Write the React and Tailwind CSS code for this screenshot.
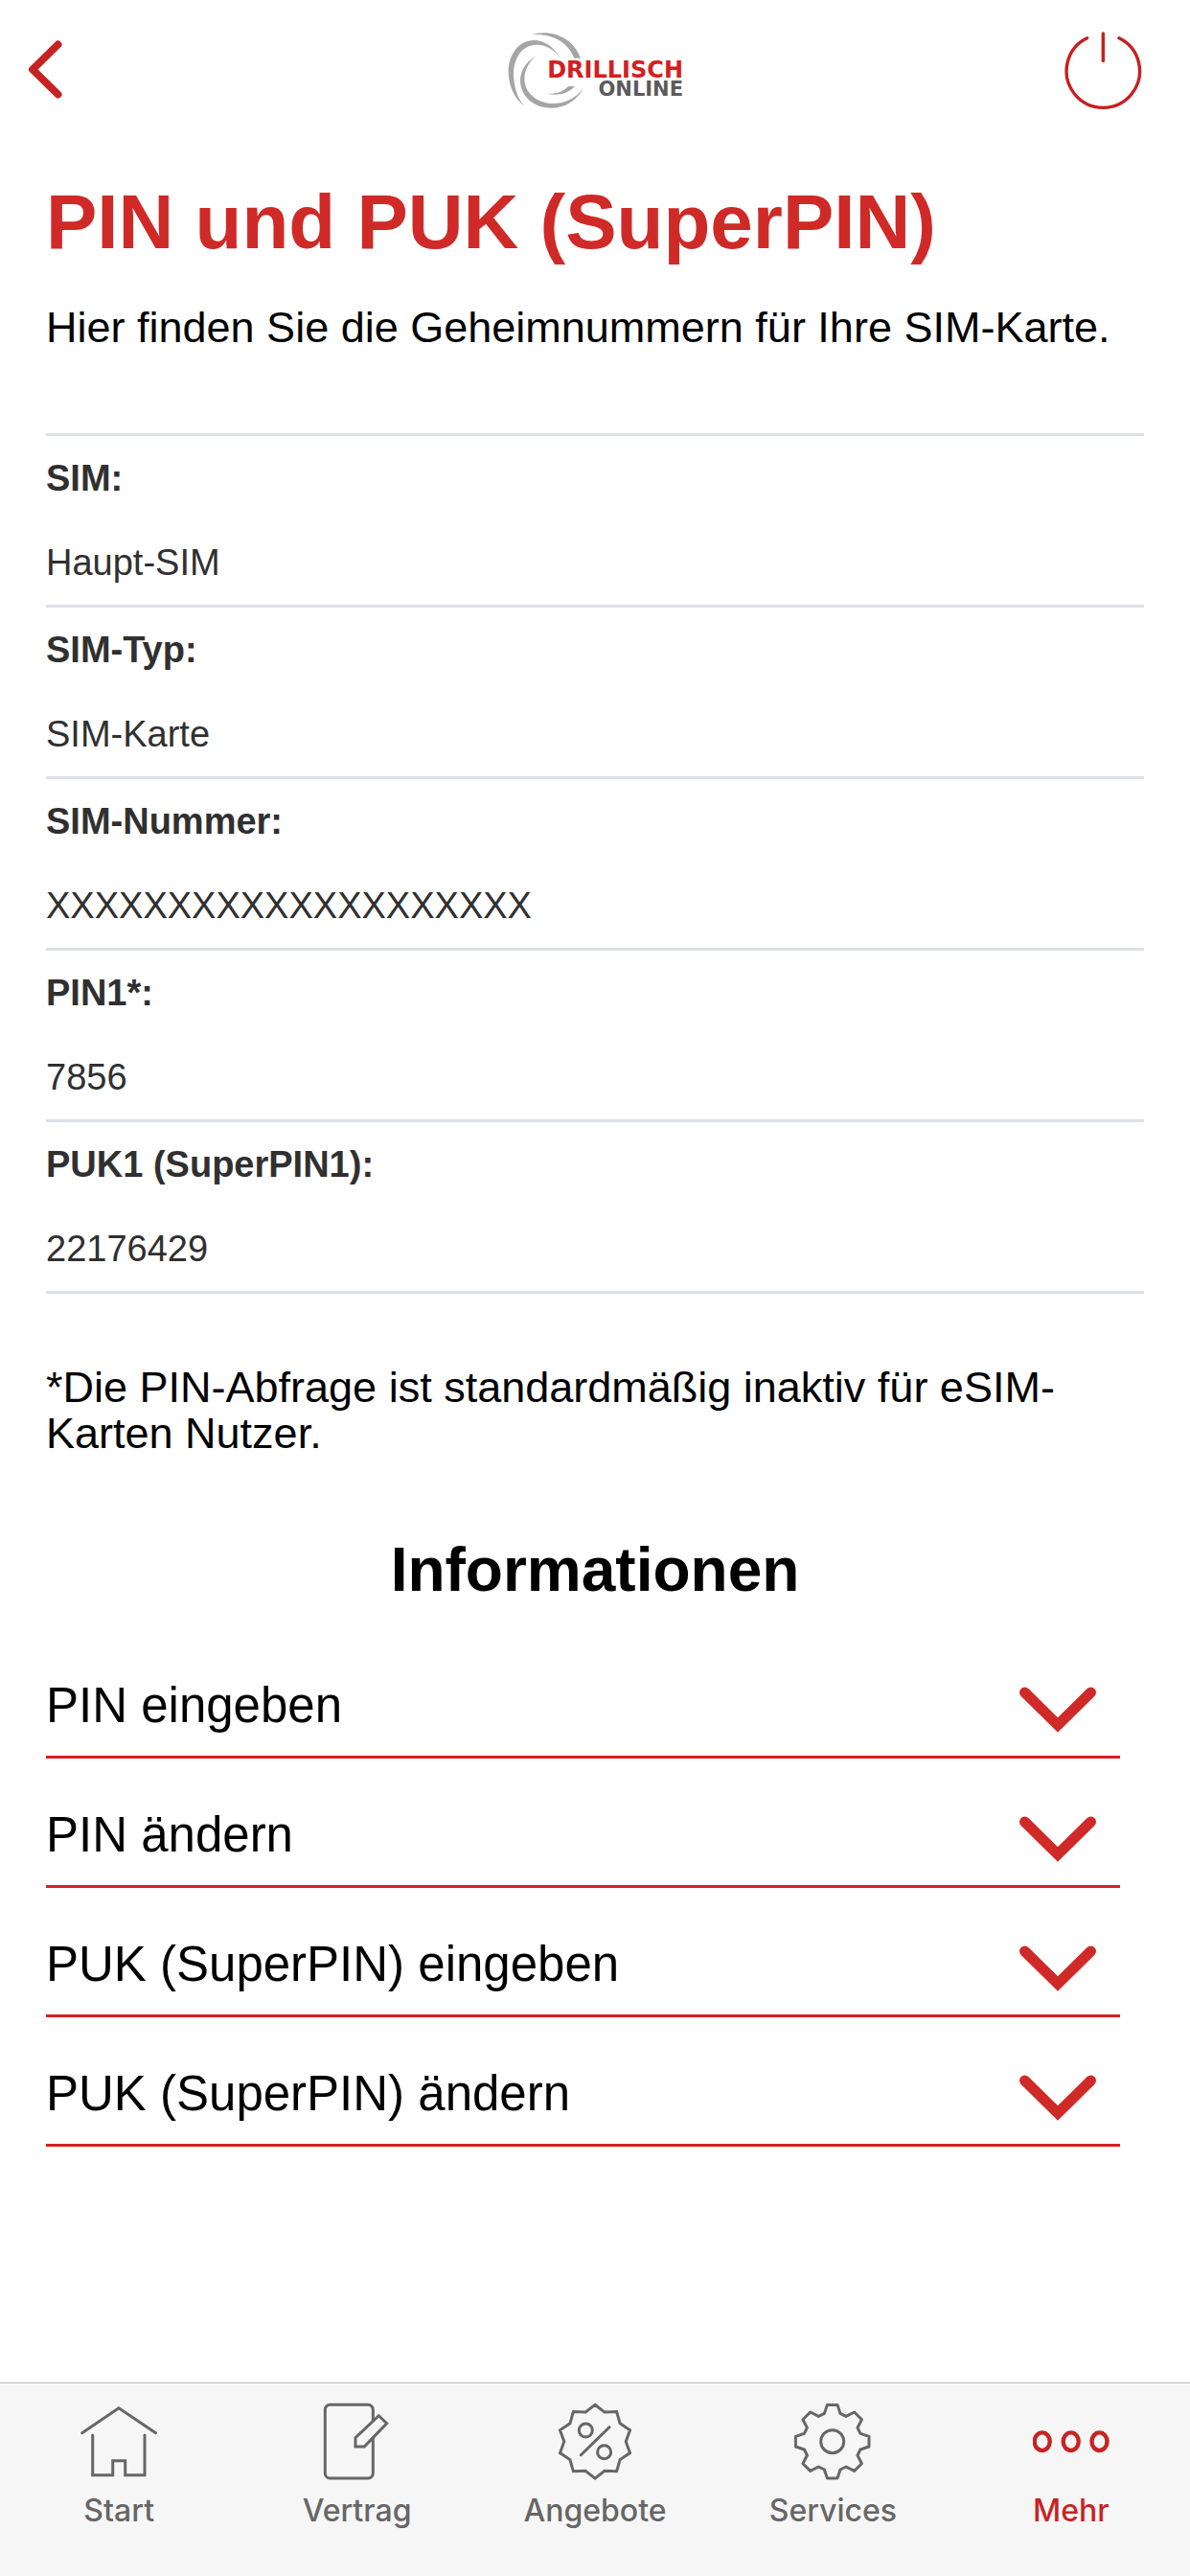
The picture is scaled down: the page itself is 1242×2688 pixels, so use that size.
import React, { useState } from 'react';

const simDetails = [
    { label: 'SIM:', value: 'Haupt-SIM' },
    { label: 'SIM-Typ:', value: 'SIM-Karte' },
    { label: 'SIM-Nummer:', value: 'XXXXXXXXXXXXXXXXXXXX' },
    { label: 'PIN1*:', value: '7856' },
    { label: 'PUK1 (SuperPIN1):', value: '22176429' },
];

const infoTopics = ['PIN eingeben', 'PIN ändern', 'PUK (SuperPIN) eingeben', 'PUK (SuperPIN) ändern'];

// Ten-pointed badge outline, alternating outer and inner radius
const badgePoints = Array.from({ length: 20 }, (_, i) => {
    const radius = i % 2 === 0 ? 38.4 : 32.2;
    const angle = (i * Math.PI) / 10;
    return `${(40 + radius * Math.sin(angle)).toFixed(1)},${(40.7 - radius * Math.cos(angle)).toFixed(1)}`;
}).join(' ');

// One quarter of the gear, repeated four times around its centre
const gearQuarter = [[5.3, -38.3], [8.3, -29.3], [14.3, -26.3], [23, -30.7], [30.7, -23], [26.3, -14.3], [29.3, -8.3], [38.3, -5.3]];
const gearPoints = [0, 1, 2, 3].flatMap((turn) =>
    gearQuarter.map(([x, y]) => {
        let px = x;
        let py = y;
        for (let i = 0; i < turn; i++) {
            [px, py] = [-py, px];
        }
        return `${(39.7 + px).toFixed(1)},${(40.7 + py).toFixed(1)}`;
    })
).join(' ');

function TabIcon({ children }) {
    return (
        <svg viewBox="0 0 80 82" className="h-[82px] w-20" fill="none" stroke="currentColor" strokeWidth="3" strokeLinecap="round" aria-hidden="true">
            {children}
        </svg>
    );
}

const tabs = [
    {
        label: 'Start',
        icon: (
            <TabIcon>
                <path d="M1.7 31.7 40 5.7 78.5 31.7" />
                <path d="M12.7 34V75.7H33.7V60.7H46.7V75.7H67V34" />
            </TabIcon>
        ),
    },
    {
        label: 'Vertrag',
        icon: (
            <TabIcon>
                <path d="M56.3 19V7.3a5 5 0 0 0-5-5H11.3a5 5 0 0 0-5 5V74a5 5 0 0 0 5 5H51.3a5 5 0 0 0 5-5V36.5" />
                <path d="M38 46V36.7L62.3 13.7 70.7 21.7 47.3 46Z" />
            </TabIcon>
        ),
    },
    {
        label: 'Angebote',
        icon: (
            <TabIcon>
                <polygon points={badgePoints} />
                <circle cx="30.3" cy="29" r="7" />
                <circle cx="49.6" cy="51.7" r="7" />
                <path d="M55 25.7 25.3 54.7" />
            </TabIcon>
        ),
    },
    {
        label: 'Services',
        icon: (
            <TabIcon>
                <polygon points={gearPoints} strokeLinejoin="round" />
                <circle cx="39.7" cy="40.7" r="12" />
            </TabIcon>
        ),
    },
    {
        label: 'Mehr',
        active: true,
        icon: (
            <TabIcon>
                <g strokeWidth="4.4">
                    <ellipse cx="9.7" cy="40.7" rx="8" ry="9.3" />
                    <ellipse cx="39.7" cy="40.7" rx="8" ry="9.3" />
                    <ellipse cx="69.5" cy="40.7" rx="8" ry="9.3" />
                </g>
            </TabIcon>
        ),
    },
];

function Logo() {
    return (
        <svg viewBox="0 0 184 84" className="h-[84px] w-[184px]" role="img" aria-label="Drillisch Online">
            <g transform="translate(-19 -22) scale(0.3333)" fill="#a5a5a5">
                <path d="M133 79C190 60 262 82 288 152L268 152C245 98 195 74 133 79Z" />
                <path d="M225 152C205 118 175 96 142 96C95 96 62 140 62 195C62 240 82 280 113 303C88 275 78 240 78 195C82 145 108 111 150 110C182 110 207 127 225 152Z" />
                <path d="M148 145C115 165 98 195 99 225C101 270 140 308 195 308C240 308 275 285 295 248C265 285 225 298 185 293C140 283 112 255 112 215C114 185 127 163 148 145Z" />
                <path d="M182 263C210 265 232 258 250 240L270 240C250 262 215 272 182 263Z" />
            </g>
            <text textAnchor="end" className="font-['DejaVu_Sans',sans-serif] font-bold">
                <tspan x="184" y="49" fill="#d2201f" className="text-[24px]">DRILLISCH</tspan>
                <tspan x="184" y="68" fill="#5b5b5b" className="text-[21px]">ONLINE</tspan>
            </text>
        </svg>
    );
}

function Header() {
    return (
        <header className="grid grid-cols-3 items-center pt-8">
            <button type="button" aria-label="Zurück" className="ml-7 justify-self-start text-[#c62424]">
                <svg viewBox="0 0 40 64" className="h-16 w-10" fill="none" stroke="currentColor" strokeWidth="8" strokeLinecap="round" strokeLinejoin="round">
                    <path d="M32.5 4.5 6 30.5 32.5 56.5" />
                </svg>
            </button>
            <div className="justify-self-center">
                <Logo />
            </div>
            <button type="button" aria-label="Abmelden" className="mr-[50px] justify-self-end text-[#c62020]">
                <svg viewBox="0 0 82 84" className="h-[84px] w-[82px]" fill="none" stroke="currentColor" strokeWidth="3.4" strokeLinecap="round">
                    <path d="M24.6 7.8A38.2 38.2 0 1 0 58 7.8" />
                    <path d="M41.3 3V31.5" />
                </svg>
            </button>
        </header>
    );
}

function InfoTopic({ title }) {
    const [open, setOpen] = useState(false);

    return (
        <button
            type="button"
            aria-expanded={open}
            onClick={() => setOpen(!open)}
            className="flex w-full items-center justify-between border-b-3 border-[#d82020] pt-11 pr-6 pb-4 text-left text-[51px] leading-[72px]"
        >
            {title}
            <svg viewBox="0 0 82 50" className={`mt-2 h-[50px] w-[82px] text-[#cf2a27] ${open ? 'rotate-180' : ''}`} fill="none" stroke="currentColor" strokeWidth="11" strokeLinecap="round">
                <path d="M6.5 7 41 41 75.5 7" />
            </svg>
        </button>
    );
}

function App() {
    return (
        <div className="flex min-h-screen flex-col bg-white font-['Liberation_Sans',Arial,sans-serif] text-black">
            <Header />
            <main className="px-12 pt-[76px]">
                <h1 className="text-[80px] leading-[80px] font-bold text-[#cf2a27]">PIN und PUK (SuperPIN)</h1>
                <p className="mt-[46px] text-[45px] leading-[48px]">Hier finden Sie die Geheimnummern für Ihre SIM-Karte.</p>

                <dl className="mt-[86px] border-t-3 border-[#dee0e6] text-[38px] leading-[88px] text-[#303030]">
                    {simDetails.map((item) => (
                        <div key={item.label} className="border-b-3 border-[#dee0e6]">
                            <dt className="font-bold">{item.label}</dt>
                            <dd>{item.value}</dd>
                        </div>
                    ))}
                </dl>

                <p className="mt-[74px] text-[45px] leading-[48px]">
                    *Die PIN-Abfrage ist standardmäßig inaktiv für eSIM-Karten Nutzer.
                </p>

                <h2 className="mt-[86px] text-center text-[64px] leading-[64px] font-bold">Informationen</h2>
                <div className="mt-[30px] pr-[25px]">
                    {infoTopics.map((title) => (
                        <InfoTopic key={title} title={title} />
                    ))}
                </div>
            </main>

            <nav className="mt-auto grid grid-cols-5 border-t border-[#bcbcbc] bg-[#f6f6f6] pt-5 pb-[47px]">
                {tabs.map((tab) => (
                    <a
                        key={tab.label}
                        href="#"
                        aria-current={tab.active ? 'page' : undefined}
                        className={`flex flex-col items-center gap-2.5 font-[Inter,sans-serif] text-[32px] leading-[42px] font-medium ${tab.active ? 'text-[#c62424]' : 'text-[#666666]'}`}
                    >
                        {tab.icon}
                        {tab.label}
                    </a>
                ))}
            </nav>
        </div>
    );
}

export default App;
